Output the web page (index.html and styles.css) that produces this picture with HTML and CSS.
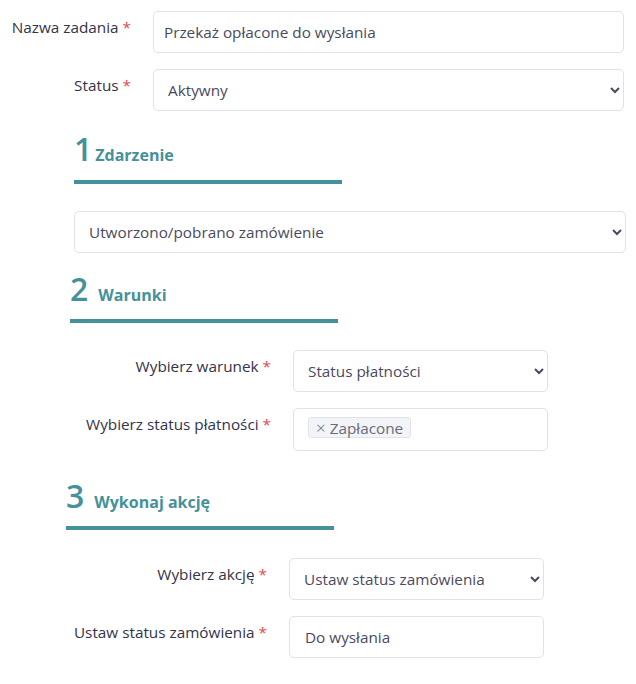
FILE: index.html
```html
<!DOCTYPE html>
<html lang="pl">
<head>
<meta charset="utf-8">
<link rel="stylesheet" href="styles.css">
</head>
<body>
<form class="form">
  <div class="row top">
    <label class="label">Nazwa zadania <span class="req">*</span></label>
    <input class="control" type="text" value="Przekaż opłacone do wysłania">
  </div>
  <div class="row top">
    <label class="label">Status <span class="req">*</span></label>
    <select class="control"><option>Aktywny</option></select>
  </div>

  <section class="section s1">
    <h2 class="heading"><span class="num">1</span><span class="title">Zdarzenie</span></h2>
    <div class="bar"></div>
    <select class="control wide"><option>Utworzono/pobrano zamówienie</option></select>
  </section>

  <section class="section s2">
    <h2 class="heading"><span class="num">2</span><span class="title">Warunki</span></h2>
    <div class="bar"></div>
    <div class="row sub">
      <label class="label">Wybierz warunek <span class="req">*</span></label>
      <select class="control"><option>Status płatności</option></select>
    </div>
    <div class="row sub">
      <label class="label">Wybierz status płatności <span class="req">*</span></label>
      <div class="control multi"><span class="tag"><span class="x">×</span> Zapłacone</span></div>
    </div>
  </section>

  <section class="section s3">
    <h2 class="heading"><span class="num">3</span><span class="title">Wykonaj akcję</span></h2>
    <div class="bar"></div>
    <div class="row sub">
      <label class="label">Wybierz akcję <span class="req">*</span></label>
      <select class="control"><option>Ustaw status zamówienia</option></select>
    </div>
    <div class="row sub">
      <label class="label">Ustaw status zamówienia <span class="req">*</span></label>
      <input class="control text-wide" type="text" value="Do wysłania">
    </div>
  </section>
</form>
</body>
</html>
```

FILE: styles.css
```css
* { box-sizing: border-box; }
body {
  margin: 0;
  background: #fff;
  font-family: "Open Sans", "Noto Sans", sans-serif;
  color: #33334a;
}
.form {
  padding-top: 11px;
}
.row {
  display: flex;
  align-items: flex-start;
  gap: 22px;
  margin-bottom: 16px;
}
.row.top {
  padding-right: 12px;
}
.row.top .label {
  width: 131px;
}
.label {
  flex: none;
  text-align: right;
  font-size: 15.3px;
  line-height: 20px;
  padding-top: 6px;
  color: #33334a;
  white-space: nowrap;
}
.req { color: #e8474a; }
.control {
  flex: 1;
  height: 42px;
  border: 1px solid #e1e1ea;
  border-radius: 5px;
  background: #fff;
  font-family: inherit;
  font-size: 15.3px;
  color: #4a4a5c;
  padding: 0 10px;
  outline: none;
}
.text-wide { padding-left: 15px; }
.section .heading {
  margin: 0;
  display: flex;
  align-items: baseline;
  gap: 10px;
  color: #45919a;
  font-weight: 700;
}
.num {
  font-size: 32px;
  line-height: 36px;
  font-weight: 600;
}
.title {
  font-size: 16px;
  font-weight: 700;
}
.bar {
  width: 268px;
  height: 4px;
  background: #45919a;
}
.s1 {
  margin-left: 74px;
  margin-right: 10px;
  padding-top: 4px;
}
.s1 .heading { gap: 3px; }
.s1 .bar { margin-top: 13px; margin-bottom: 27px; }
.s1 .wide { width: 100%; display: block; }
.s2 {
  margin-left: 70px;
  padding-top: 18px;
}
.s2 .bar { margin-top: 12px; margin-bottom: 27px; }
.s3 .bar { margin-top: 12px; margin-bottom: 28px; }
.sub .label { width: 201px; }
.sub .control { flex: none; width: 255px; }
.s3 {
  margin-left: 66px;
  padding-top: 11px;
}
.multi {
  height: 43px;
  display: flex;
  align-items: flex-start;
  padding: 8px 14px;
}
.tag {
  display: inline-flex;
  align-items: center;
  gap: 4px;
  height: 21px;
  padding: 0 7px;
  background: #f3f4f7;
  border: 1px solid #e2e3ea;
  border-radius: 3px;
  font-size: 15.3px;
  color: #6a6a78;
}
.x { font-size: 17px; font-weight: 300; }
```
